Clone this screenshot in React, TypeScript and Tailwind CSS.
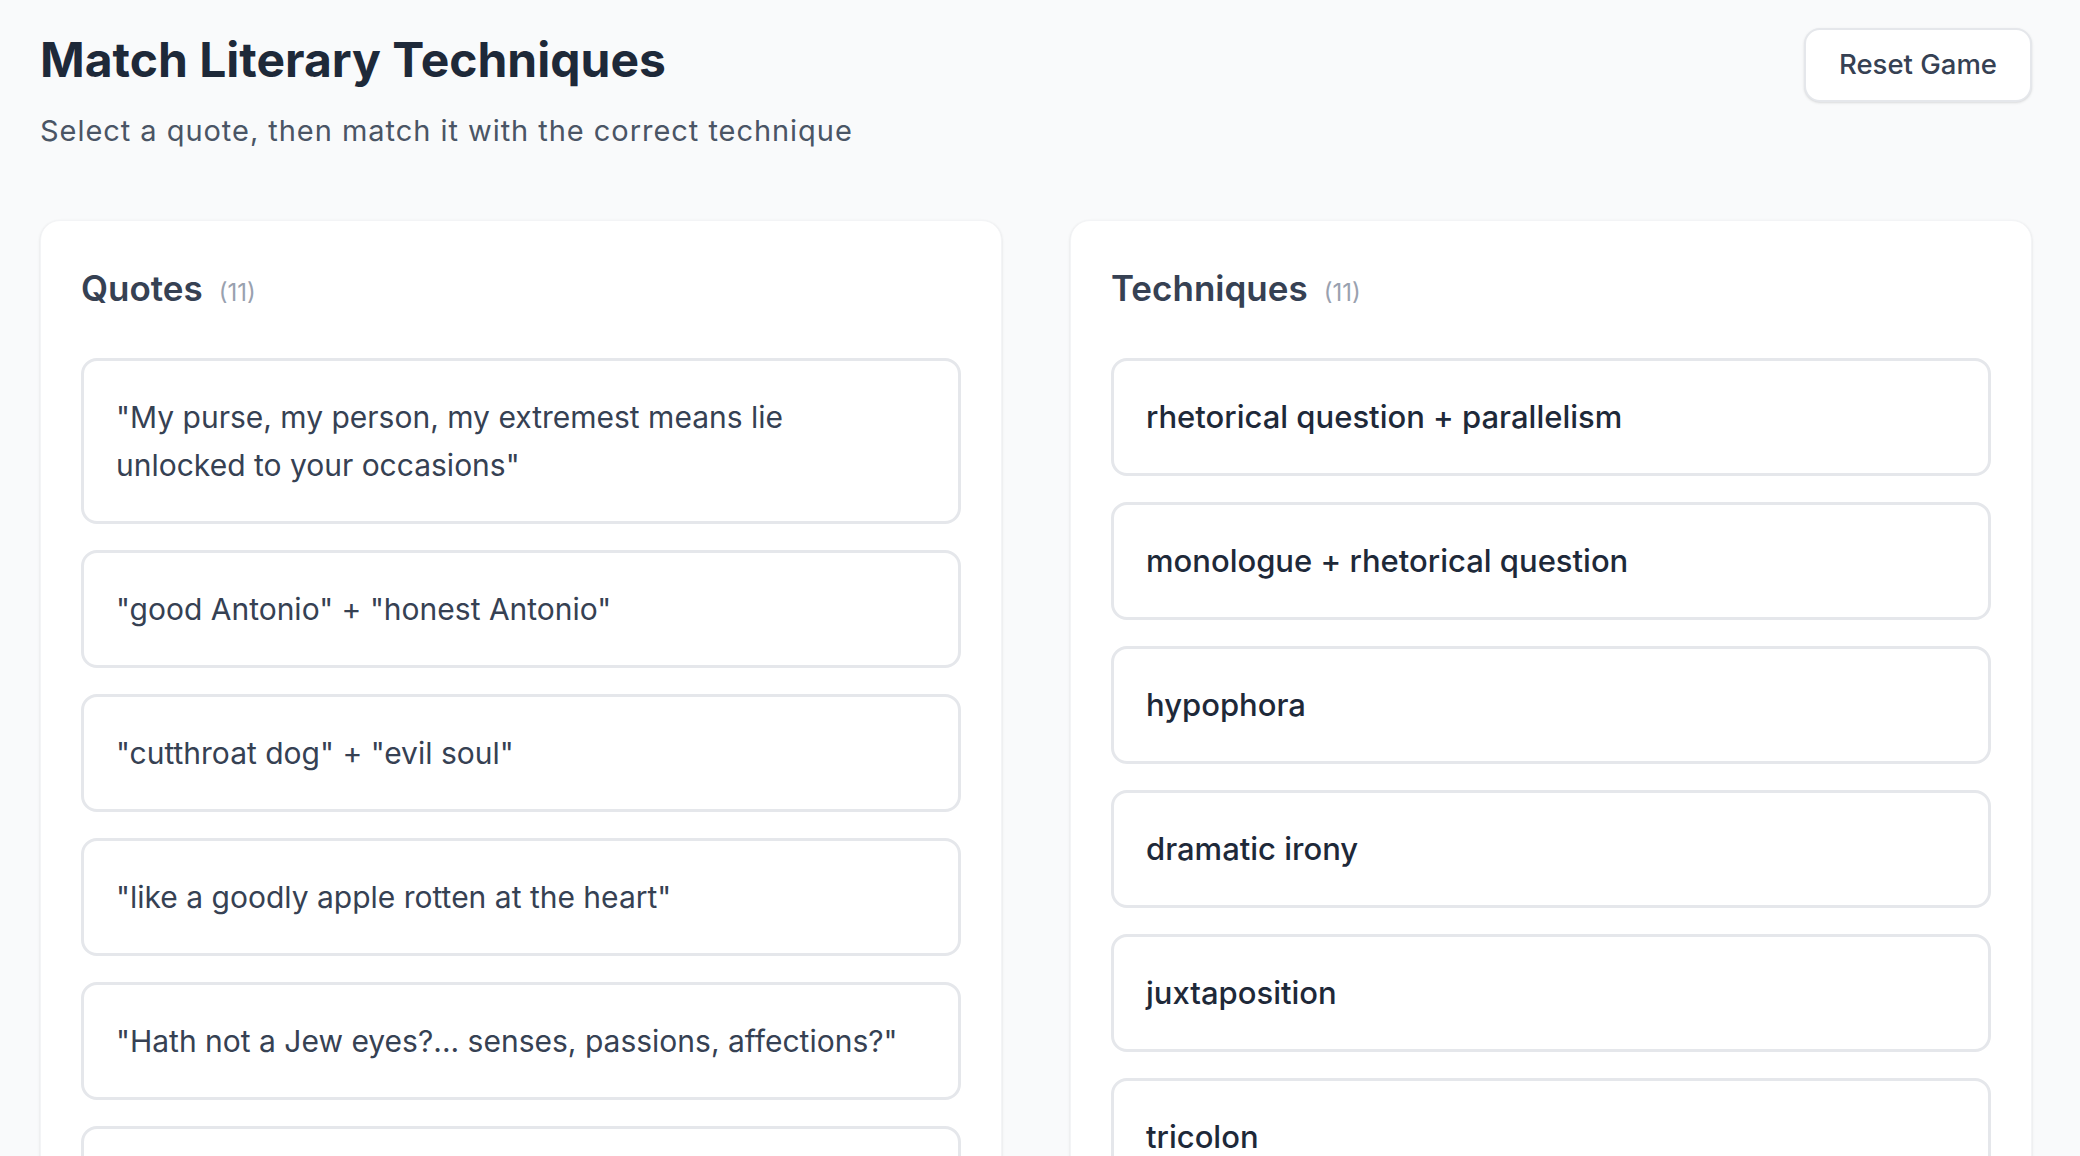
const quotes = [
  "\"My purse, my person, my extremest means lie unlocked to your occasions\"",
  "\"good Antonio\" + \"honest Antonio\"",
  "\"cutthroat dog\" + \"evil soul\"",
  "\"like a goodly apple rotten at the heart\"",
  "\"Hath not a Jew eyes?... senses, passions, affections?\"",
  "\"The quality of mercy is not strained\"",
  "\"All that glisters is not gold\"",
  "\"If you prick us, do we not bleed?\"",
  "\"I am a Jew\"",
  "\"My daughter! O my ducats! O my daughter!\"",
  "\"The devil can cite Scripture for his purpose\"",
];

const techniques = [
  "rhetorical question + parallelism",
  "monologue + rhetorical question",
  "hypophora",
  "dramatic irony",
  "juxtaposition",
  "tricolon",
  "simile",
  "metaphor",
  "epithet",
  "repetition",
  "dehumanising imagery",
];

function Panel({ title, items, kind }: { title: string; items: string[]; kind: "quote" | "technique" }) {
  return (
    <section className="bg-white rounded-[20px] border border-gray-100 shadow-sm px-[40px] pt-[43px] pb-[40px]">
      <div className="flex items-baseline gap-[16px] mb-[46px]">
        <h2 className="text-[35px] leading-[48px] font-semibold text-gray-700">{title}</h2>
        <span className="text-[24px] text-gray-400">({items.length})</span>
      </div>
      <div className="flex flex-col gap-[26px]">
        {items.map((item) => (
          <button
            key={item}
            className={
              kind === "quote"
                ? "text-left w-full border-[3px] border-gray-200 rounded-[16px] pl-[32px] pr-[56px] py-[32px] text-[30px] leading-[48px] text-gray-700 bg-white"
                : "text-left w-full border-[3px] border-gray-200 rounded-[16px] pl-[32px] pr-[56px] py-[32px] text-[31px] leading-[48px] font-medium text-gray-800 bg-white"
            }
          >
            {item}
          </button>
        ))}
      </div>
    </section>
  );
}

export default function App() {
  return (
    <div className="min-h-screen bg-gray-50 font-['Inter',sans-serif]">
      <div className="pl-[40px] pr-[48px] pt-[28px] pb-10">
        <header className="flex items-start justify-between">
          <div className="mt-[8px]">
            <h1 className="text-[48px] leading-[48px] font-bold text-gray-800">Match Literary Techniques</h1>
            <p className="mt-[27px] text-[29px] leading-[40px] tracking-[0.033em] text-gray-600">
              Select a quote, then match it with the correct technique
            </p>
          </div>
          <button className="h-[74px] px-[33px] rounded-[16px] border-2 border-gray-200 bg-white shadow-sm text-[27.5px] font-medium text-gray-700">
            Reset Game
          </button>
        </header>

        <div className="grid grid-cols-2 gap-[68px] mt-[69px]">
          <Panel title="Quotes" items={quotes} kind="quote" />
          <Panel title="Techniques" items={techniques} kind="technique" />
        </div>
      </div>
    </div>
  );
}
